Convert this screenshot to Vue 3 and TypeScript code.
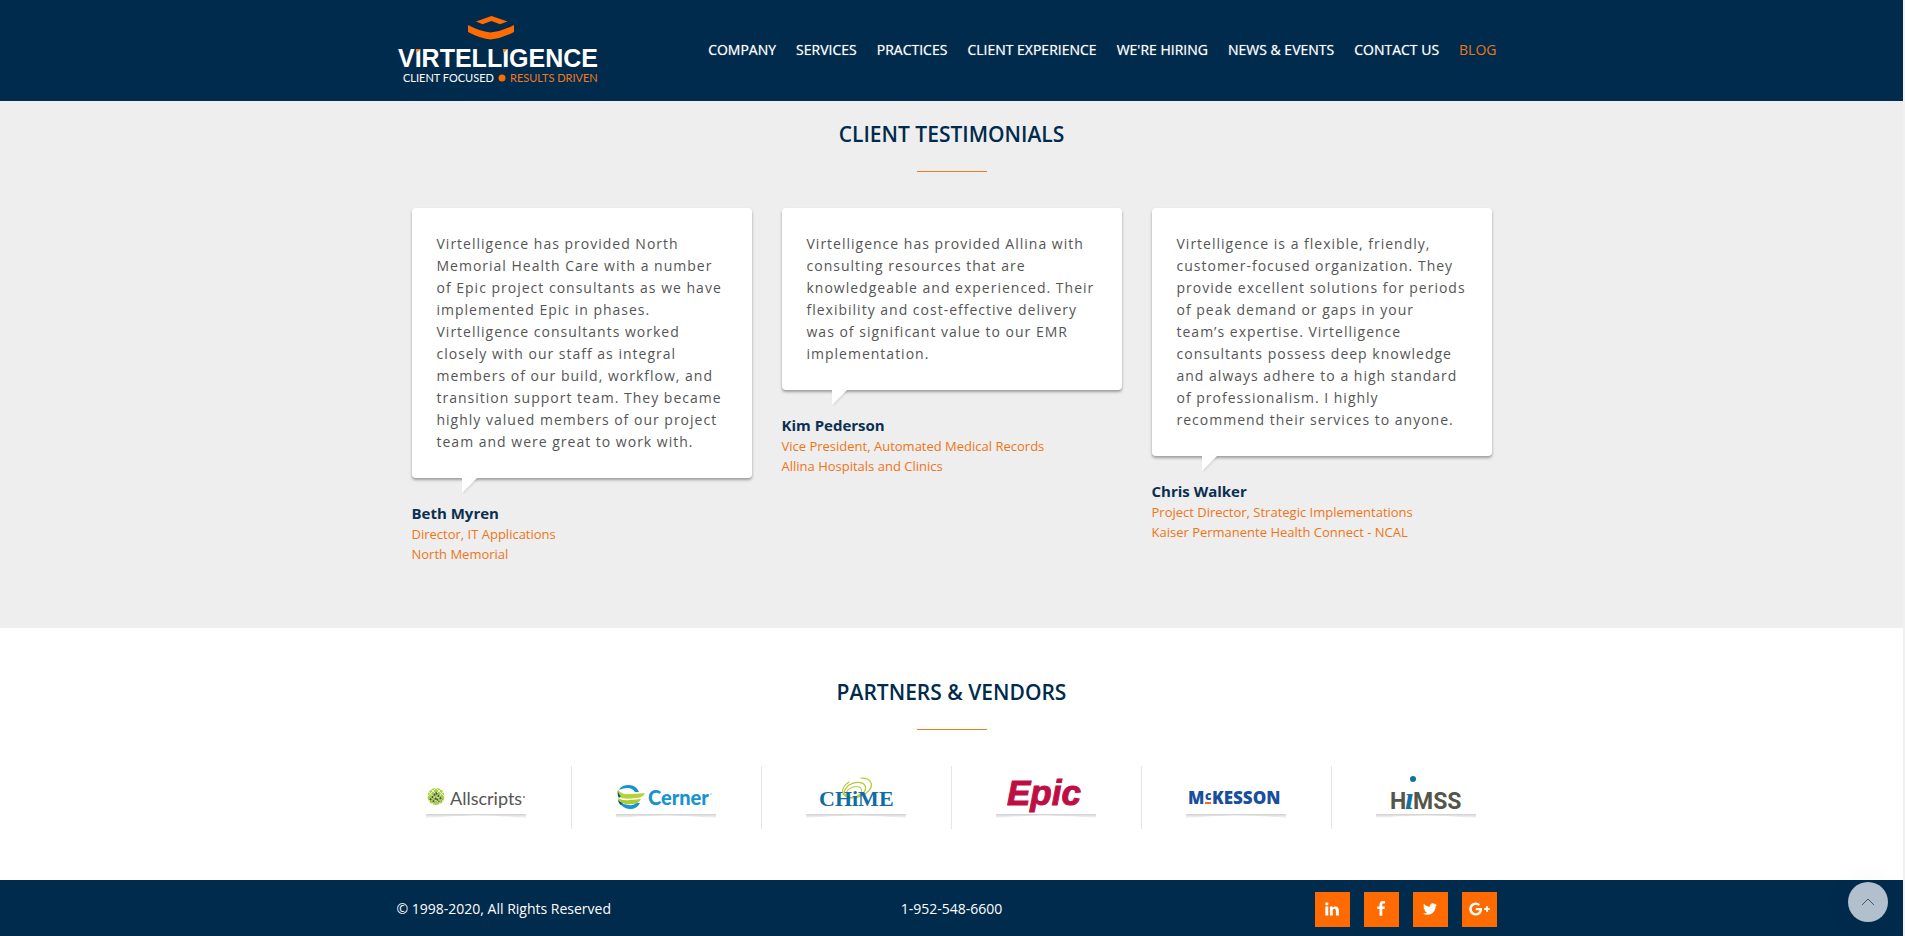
<script setup lang="ts">
interface NavItem {
  label: string
  active?: boolean
}

interface Testimonial {
  quote: string
  name: string
  role: string
  company: string
}

interface SocialLink {
  name: string
  viewBox: string
  width: number
  path: string
}

const navItems: NavItem[] = [
  { label: 'COMPANY' },
  { label: 'SERVICES' },
  { label: 'PRACTICES' },
  { label: 'CLIENT EXPERIENCE' },
  { label: "WE'RE HIRING" },
  { label: 'NEWS & EVENTS' },
  { label: 'CONTACT US' },
  { label: 'BLOG', active: true },
]

const testimonials: Testimonial[] = [
  {
    quote:
      'Virtelligence has provided North Memorial Health Care with a number of Epic project consultants as we have implemented Epic in phases. Virtelligence consultants worked closely with our staff as integral members of our build, workflow, and transition support team. They became highly valued members of our project team and were great to work with.',
    name: 'Beth Myren',
    role: 'Director, IT Applications',
    company: 'North Memorial',
  },
  {
    quote:
      'Virtelligence has provided Allina with consulting resources that are knowledgeable and experienced. Their flexibility and cost-effective delivery was of significant value to our EMR implementation.',
    name: 'Kim Pederson',
    role: 'Vice President, Automated Medical Records',
    company: 'Allina Hospitals and Clinics',
  },
  {
    quote:
      'Virtelligence is a flexible, friendly, customer-focused organization. They provide excellent solutions for periods of peak demand or gaps in your team’s expertise. Virtelligence consultants possess deep knowledge and always adhere to a high standard of professionalism. I highly recommend their services to anyone.',
    name: 'Chris Walker',
    role: 'Project Director, Strategic Implementations',
    company: 'Kaiser Permanente Health Connect - NCAL',
  },
]

const partners: string[] = ['Allscripts', 'Cerner', 'CHiME', 'Epic', 'McKesson', 'HiMSS']

const socialLinks: SocialLink[] = [
  {
    name: 'LinkedIn',
    viewBox: '0 0 1792 1792',
    width: 16,
    path: 'M477 625v991h-330v-991h330zm21-306q1 73-50.5 122t-135.5 49h-2q-82 0-132-49t-50-122q0-74 51.5-122.5t134.5-48.5 133 48.5 51 122.5zm1166 729v568h-329v-530q0-105-40.5-164.5t-126.5-59.5q-63 0-105.5 34.5t-63.5 85.5q-11 30-11 81v553h-329q2-399 2-647t-1-296l-1-48h329v144h-2q20-32 41-56t56.5-52 87-43.5 114.5-15.5q171 0 275 113.5t104 332.5z',
  },
  {
    name: 'Facebook',
    viewBox: '0 0 1792 1792',
    width: 16,
    path: 'M1343 12v264h-157q-86 0-116 36t-30 108v189h293l-39 296h-254v759h-306v-759h-255v-296h255v-218q0-186 104-288.5t277-102.5q147 0 228 12z',
  },
  {
    name: 'Twitter',
    viewBox: '0 0 1792 1792',
    width: 16,
    path: 'M1684 408q-67 98-162 167 1 14 1 42 0 130-38 259.5t-115.5 248.5-184.5 210.5-258 146-323 54.5q-271 0-496-145 35 4 78 4 225 0 401-138-105-2-188-64.5t-114-159.5q33 5 61 5 43 0 85-11-112-23-185.5-111.5t-73.5-205.5v-4q68 38 146 41-66-44-105-115t-39-154q0-88 44-163 121 149 294.5 238.5t371.5 99.5q-8-38-8-74 0-134 94.5-228.5t228.5-94.5q140 0 236 102 109-21 205-78-37 115-142 178 93-10 186-50z',
  },
  {
    name: 'Google Plus',
    viewBox: '0 0 2304 1792',
    width: 21,
    path: 'M1437 913q0 208-87 370.5t-248 254-369 91.5q-149 0-285-58t-234-156-156-234-58-285 58-285 156-234 234-156 285-58q286 0 491 192l-199 191q-117-113-292-113-123 0-227.5 62t-165.5 168.5-61 232.5 61 232.5 165.5 168.5 227.5 62q83 0 152.5-23t114.5-57.5 78.5-78.5 49-83 21.5-74h-416v-252h692q12 63 12 122zm867-122v210h-209v209h-210v-209h-209v-210h209v-209h210v209h209z',
  },
]

function scrollToTop(): void {
  window.scrollTo({ top: 0, behavior: 'smooth' })
}
</script>

<template>
  <div class="page">
    <header class="site-header">
      <div class="bar">
        <a class="brand" href="#" aria-label="Virtelligence home">
          <svg width="206" height="76" viewBox="0 0 206 76">
            <g fill="#ff6b00">
              <path d="M79 9.5 94.500 4 110.500 9.500 103 12.200 94.500 9 85.500 12.200Z" />
              <path d="M71 13q11 6 22.500 7.500Q106 19 117 13v7q-11 6-23.500 7.500Q82 26 71 20Z" />
            </g>
            <text class="brand-name" x="1" y="55">VIRTELLIGENCE</text>
            <path d="M19 37h5l-5 4zM106 37h5l-5 4z" fill="#f08020" />
            <text class="brand-tag" x="6" y="70">CLIENT FOCUSED</text>
            <circle cx="105" cy="66" r="3.500" fill="#ff6b00" />
            <text class="brand-tag accent" x="113" y="70">RESULTS DRIVEN</text>
          </svg>
        </a>
        <nav class="nav" aria-label="Main">
          <a v-for="item in navItems" :key="item.label" href="#" :class="{ active: item.active }">{{ item.label }}</a>
        </nav>
      </div>
    </header>

    <section class="testimonials">
      <h2>CLIENT TESTIMONIALS</h2>
      <div class="cards">
        <figure v-for="item in testimonials" :key="item.name" class="testimonial">
          <blockquote>{{ item.quote }}</blockquote>
          <figcaption>
            <strong>{{ item.name }}</strong>
            <span>{{ item.role }}</span>
            <span>{{ item.company }}</span>
          </figcaption>
        </figure>
      </div>
    </section>

    <section class="partners">
      <h2>PARTNERS &amp; VENDORS</h2>
      <ul>
        <li v-for="partner in partners" :key="partner">
          <svg width="100" height="63" viewBox="0 0 100 63" role="img" :aria-label="partner">
            <defs>
              <linearGradient :id="'shade-' + partner" x1="0" y1="0" x2="0" y2="1">
                <stop offset="0" stop-color="#d0d0d0" />
                <stop offset="1" stop-color="#fafafa" />
              </linearGradient>
            </defs>
            <path d="M0 48h100v4Q50 47 0 52z" :fill="`url(#shade-${partner})`" />

            <g v-if="partner === 'Allscripts'">
              <circle cx="10" cy="30.500" r="8.500" fill="#a8cf45" />
              <g fill="none" stroke="#fff" stroke-width="0.700">
                <path d="M3 26 14 38M5 23 17 35M9 21 19 31M17 26 6 38M15 23 3 35M11 21 1 31" />
              </g>
              <path d="m4 34 6-7 6 7M7 36l3-4 3 4" fill="none" stroke="#4a5152" stroke-width="1.700" stroke-dasharray="2 1" />
              <text class="allscripts" x="24" y="39">Allscripts</text>
              <circle cx="98" cy="31" r="1" fill="#777" />
            </g>

            <g v-else-if="partner === 'Cerner'">
              <path d="M3 24Q5 19 13 19q7 0 10 7h-4q-3-4-7-4-5 0-9 2zM3 36q4 7 11 7 7 0 10-6h-4q-3 3-7 2-5 0-10-3z" fill="#1793d1" />
              <path d="M2 24q4 5 12 4 7 0 15-1-2 5-9 5-14 2-17-2-2-2-1-6z" fill="#b5d334" />
              <path d="M2 32q4 3 12 2l11-1q-2 5-9 5-13 1-14-6z" fill="#a9cc2f" />
              <path d="M2 24q0 4 3 6l-2 2q-2-3-1-8zM2 33q0 4 3 6l2-2q-4-1-5-4z" fill="#07577b" />
              <text class="cerner" x="32" y="39">Cerner</text>
              <circle cx="95" cy="28" r="0.600" fill="#1793d1" />
            </g>

            <g v-else-if="partner === 'CHiME'">
              <g fill="none" stroke="#b9c938">
                <ellipse cx="51" cy="22" rx="15" ry="9" stroke-width="1.300" transform="rotate(-20 51 22)" stroke-dasharray="52 12" />
                <ellipse cx="49" cy="24" rx="11" ry="7" stroke-width="1.200" transform="rotate(-20 49 24)" />
                <ellipse cx="48" cy="26" rx="8" ry="5" transform="rotate(-20 48 26)" />
              </g>
              <text class="chime" x="13" y="40">CHiME</text>
            </g>

            <g v-else-if="partner === 'Epic'">
              <text class="epic" x="11" y="39">Epic</text>
            </g>

            <g v-else-if="partner === 'McKesson'">
              <text class="mckesson" x="2" y="38">M</text>
              <text class="mckesson small" x="19" y="34">c</text>
              <path d="M19 36h6v2h-6z" fill="#f26b35" />
              <text class="mckesson" x="26" y="38">KESSON</text>
            </g>

            <g v-else>
              <text class="himss" x="14" y="43">H</text>
              <text class="himss-i" x="29" y="43">ı</text>
              <circle cx="37" cy="13" r="3" fill="#11729b" />
              <text class="himss" x="37" y="43">MSS</text>
            </g>
          </svg>
        </li>
      </ul>
    </section>

    <footer class="site-footer">
      <div class="bar">
        <p>© 1998-2020, All Rights Reserved</p>
        <a class="phone" href="tel:1-952-548-6600">1-952-548-6600</a>
        <div class="social">
          <a v-for="link in socialLinks" :key="link.name" href="#" :aria-label="link.name">
            <svg :width="link.width" height="16" :viewBox="link.viewBox"><path :d="link.path" fill="#fff" /></svg>
          </a>
        </div>
      </div>
    </footer>

    <button class="to-top" type="button" aria-label="Back to top" @click="scrollToTop">
      <svg width="14" height="8" viewBox="0 0 14 8"><path d="m1 7 6-6 6 6" fill="none" stroke="#4a5563" /></svg>
    </button>
  </div>
</template>

<style>
body {
  margin: 0;
}
</style>

<style scoped>
.page {
  min-height: 100vh;
  box-sizing: border-box;
  border-right: 2px solid #f1f1f1;
  background: #fff;
  display: flex;
  flex-direction: column;
  font-family: "Open Sans", "Noto Sans", sans-serif;
  color: #002b4c;
}

a {
  color: inherit;
  text-decoration: none;
}

.site-header,
.site-footer {
  background: #002b4c;
  color: #fff;
}

.bar {
  max-width: 1110px;
  margin: 0 auto;
  display: grid;
  align-items: center;
}

.site-header .bar {
  grid-template-columns: auto 1fr;
  height: 100px;
  padding-bottom: 1px;
}

.brand svg {
  display: block;
}

.brand-name {
  font: bold 25px "Liberation Sans", Arial, sans-serif;
  fill: #fff;
}

.brand-tag {
  font: 11px Lato, sans-serif;
  fill: #fff;
}

.brand-tag.accent {
  fill: #ee7a22;
}

.nav {
  padding-right: 10px;
  display: flex;
  justify-content: flex-end;
  gap: 20px;
  font-size: 14px;
  font-weight: 500;
  line-height: 20px;
  text-shadow: 0 0 1px rgba(255, 255, 255, 0.6);
}

.nav .active {
  color: #e8771e;
  font-weight: 400;
  text-shadow: none;
}

h2 {
  margin: 0;
  display: flex;
  flex-direction: column;
  align-items: center;
  gap: 21px;
  font-size: 21px;
  font-weight: 600;
  line-height: 32px;
}

h2::after {
  content: "";
  width: 70px;
  height: 1px;
  background: #e87d1e;
}

.testimonials {
  background: #eee;
  padding: 17px 0 64px;
}

.cards {
  max-width: 1080px;
  margin: 36px auto 0;
  display: grid;
  grid-template-columns: repeat(3, 1fr);
  align-items: start;
  gap: 30px;
}

.testimonial {
  margin: 0;
}

blockquote {
  position: relative;
  margin: 0;
  padding: 25px;
  border-radius: 4px;
  background: #fff;
  box-shadow: 0 2px 3px rgba(0, 0, 0, 0.35);
  color: #555;
  font-size: 14px;
  font-weight: 400;
  letter-spacing: 1px;
  line-height: 22px;
}

blockquote::after {
  content: "";
  position: absolute;
  top: 100%;
  left: 50px;
  border-top: 15px solid #fff;
  border-right: 15px solid transparent;
  filter: drop-shadow(1px 1px 1px rgba(0, 0, 0, 0.1));
}

figcaption {
  margin-top: 24px;
  display: flex;
  flex-direction: column;
  color: #ee7516;
  font-size: 13px;
  line-height: 20px;
}

figcaption strong {
  color: #0b2f50;
  font-size: 15px;
  font-weight: 700;
  line-height: 22px;
}

.partners {
  flex: 1;
  padding: 48px 0 50px;
}

.partners ul {
  max-width: 1140px;
  margin: 36px auto 0;
  padding: 0;
  display: grid;
  grid-template-columns: repeat(6, 1fr);
  list-style: none;
}

.partners li {
  display: flex;
  justify-content: center;
  border-right: 1px solid #e6e6e6;
}

.partners li:last-child {
  border-right-color: transparent;
}

.partners svg {
  overflow: visible;
}

.allscripts {
  font: 18px Lato, sans-serif;
  fill: #555;
}

.cerner {
  font: 900 20px Lato, sans-serif;
  fill: #1793d1;
}

.chime {
  font: bold 22px "Liberation Serif", serif;
  fill: #0f6ca5;
}

.epic {
  font: italic bold 35px "Liberation Sans", Arial, sans-serif;
  fill: #be0f45;
  stroke: #be0f45;
}

.mckesson {
  font: 800 17px "Open Sans", sans-serif;
  fill: #184f9e;
}

.mckesson.small {
  font-size: 12px;
}

.himss {
  font: bold 23px Roboto, sans-serif;
  fill: #55564a;
}

.himss-i {
  font: italic bold 32px "Liberation Serif", serif;
  fill: #11729b;
}

.site-footer .bar {
  grid-template-columns: 1fr auto 1fr;
  height: 54px;
  padding-top: 2px;
  font-size: 14px;
  line-height: 20px;
}

.site-footer p {
  margin: 0;
}

.social {
  padding-right: 10px;
  display: flex;
  justify-content: flex-end;
  gap: 14px;
}

.social a {
  width: 35px;
  height: 35px;
  display: flex;
  align-items: center;
  justify-content: center;
  background: #ff6b00;
}

.to-top {
  position: fixed;
  right: 17px;
  bottom: 14px;
  width: 40px;
  height: 40px;
  padding: 0;
  border: 0;
  border-radius: 50%;
  background: #b2bfcc;
  display: flex;
  align-items: center;
  justify-content: center;
  box-shadow: 0 0 30px rgba(0, 0, 0, 0.06);
}
</style>
